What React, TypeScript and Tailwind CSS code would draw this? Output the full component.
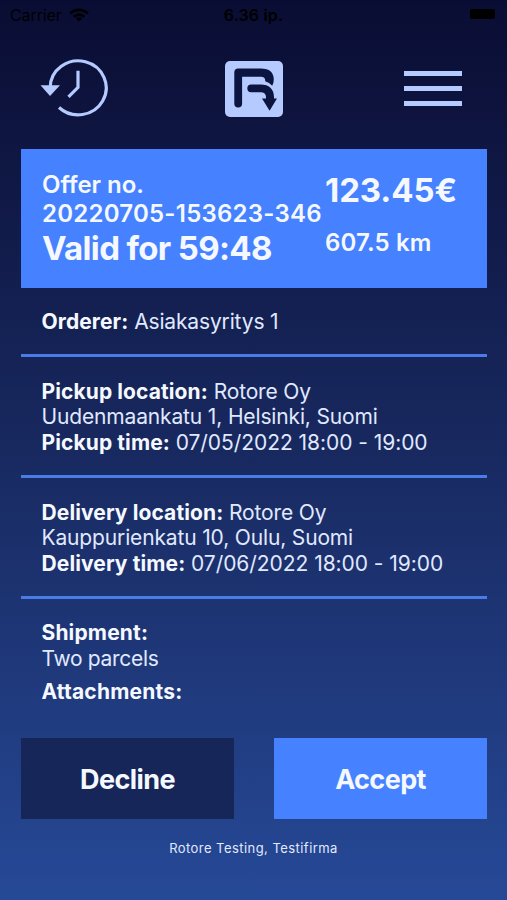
import type { ReactElement } from "react";

const STOPS = [
	{
		id: "pickup",
		locationLabel: "Pickup location:",
		company: "Rotore Oy",
		address: "Uudenmaankatu 1, Helsinki, Suomi",
		timeLabel: "Pickup time:",
		time: "07/05/2022 18:00 - 19:00",
	},
	{
		id: "delivery",
		locationLabel: "Delivery location:",
		company: "Rotore Oy",
		address: "Kauppurienkatu 10, Oulu, Suomi",
		timeLabel: "Delivery time:",
		time: "07/06/2022 18:00 - 19:00",
	},
];

function StatusBar(): ReactElement {
	return (
		<div className="grid h-[30px] grid-cols-3 items-center pr-[12px] pl-[10px] text-[16px] leading-none text-black">
			<div className="flex items-center gap-[7px]">
				<span className="tracking-[-0.1px]">Carrier</span>
				<svg width="20" height="14" viewBox="0 0 20 14" fill="none" stroke="currentColor" strokeWidth="2.8">
					<path d="M1.2 5.4a12.6 12.6 0 0 1 17.6 0" />
					<path d="M4.6 8.8a7.8 7.8 0 0 1 10.8 0" />
					<path d="M10 13.6 6.8 10.6a4.6 4.6 0 0 1 6.4 0z" fill="currentColor" stroke="none" />
				</svg>
			</div>
			<span className="pl-[2px] text-center font-semibold tracking-[0.15px]">6.36 ip.</span>
			<div className="mb-[2px] h-[10px] w-[25px] justify-self-end rounded-[2px] bg-black" />
		</div>
	);
}

function HistoryIcon(): ReactElement {
	return (
		<svg width="70" height="62" viewBox="0 0 70 62" fill="none" stroke="#b5caff" strokeWidth="3.2" className="mb-[2px]">
			<path d="M11.2 29.5A28 27 0 1 1 20 49.5" />
			<path d="M39 12.8v16.5l-9.500 9.500" />
			<path d="M1.5 27.2h19.500L11 38z" fill="#b5caff" stroke="none" />
		</svg>
	);
}

function Logo(): ReactElement {
	return (
		<svg width="58" height="56" viewBox="0 0 58 56" className="mr-[6px] mb-[1px]">
			<rect width="58" height="56" rx="5" fill="#b5caff" />
			<g fill="#0c1440">
				<path d="M9.3 42.6V11.5q0-4 4-4H36q12.500 0 12.800 11 0 3.500-1.600 6.200-2.800-3.200-7-4.400.300-4.600-4.200-4.600H17.100v26.900a3.900 3.900 0 0 1-7.800 0z" />
				<path d="M26.200 23.400h9.300q13 0 13.500 12.600v1.500h3l-7.400 12.300L37 37.500h4q.600-6.300-5.500-6.300h-9.300a3.900 3.900 0 0 1 0-7.800z" />
			</g>
		</svg>
	);
}

export default function App(): ReactElement {
	return (
		<main className="flex h-[900px] w-full flex-col bg-linear-to-b from-[#0a0d33] via-[#182960] to-[#264997] font-[Inter,sans-serif] text-[#e0e9ff]">
			<StatusBar />
			<header className="flex h-[119px] items-center justify-between pr-[45px] pl-[39px]">
				<HistoryIcon />
				<Logo />
				<div className="mb-[2px] flex w-[58px] flex-col gap-[10px]">
					<div className="h-[5px] bg-[#b5caff]" />
					<div className="h-[5px] bg-[#b5caff]" />
					<div className="h-[5px] bg-[#b5caff]" />
				</div>
			</header>

			<section className="mr-[20px] ml-[21px] flex h-[139px] bg-[#4681ff] pl-[21px] font-semibold whitespace-nowrap text-[#f5f9ff]">
				<div className="w-[283px] pt-[21px]">
					<p className="text-[24px] leading-[29px] tracking-[-0.05px]">Offer no.</p>
					<p className="text-[24px] leading-[29px] tracking-[0.24px]">20220705-153623-346</p>
					<p className="text-[33px] leading-[40px] font-bold tracking-[-0.65px]">Valid for 59:48</p>
				</div>
				<div className="pt-[21px]">
					<p className="text-[33px] leading-[40px] font-bold tracking-[-0.1px]">123.45€</p>
					<p className="mt-[18px] text-[24px] leading-[29px] tracking-[0.15px]">607.5 km</p>
				</div>
			</section>

			<div className="mr-[20px] ml-[21px] text-[21px] leading-[25.7px] tracking-[-0.15px] whitespace-nowrap">
				<section className="h-[69px] border-b-3 border-[#4a7be6] pt-[21px] pl-[20.5px]">
					<b className="font-bold tracking-[0.1px] text-[#f5f9ff]">Orderer:</b> Asiakasyritys 1
				</section>
				{STOPS.map((stop) => (
					<section key={stop.id} className="h-[121px] border-b-3 border-[#4a7be6] pt-[21.5px] pl-[20.5px]">
						<p>
							<b className="font-bold tracking-[0.1px] text-[#f5f9ff]">{stop.locationLabel}</b> {stop.company}
						</p>
						<p>{stop.address}</p>
						<p>
							<b className="font-bold tracking-[0.1px] text-[#f5f9ff]">{stop.timeLabel}</b>{" "}
							<span className="tracking-[-0.05px]">{stop.time}</span>
						</p>
					</section>
				))}
				<section className="h-[139px] pt-[21px] pl-[20.5px]">
					<p className="font-bold tracking-[0.15px] text-[#f5f9ff]">Shipment:</p>
					<p className="tracking-[-0.3px]">Two parcels</p>
					<p className="mt-[7.5px] font-bold tracking-[0.2px] text-[#f5f9ff]">Attachments:</p>
				</section>
			</div>

			<div className="mr-[20px] ml-[21px] grid h-[81px] grid-cols-2 gap-10 text-[27px] font-bold tracking-[-0.6px] text-[#f5f9ff]">
				<button className="bg-[#172659] pt-[3px]">Decline</button>
				<button className="bg-[#4681ff] pt-[3px]">Accept</button>
			</div>
			<footer className="mt-[20px] text-center text-[13px] leading-[18px] tracking-[0.45px]">
				Rotore Testing, Testifirma
			</footer>
		</main>
	);
}
